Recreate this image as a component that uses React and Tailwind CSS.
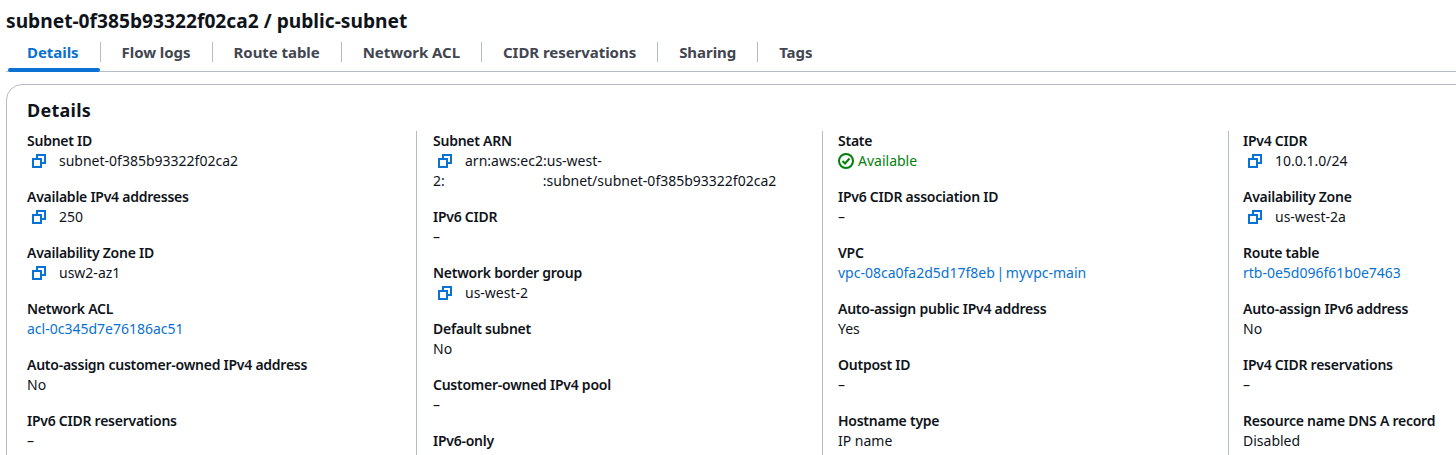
const copyIcon = (
  <svg viewBox="0 0 16 16" className="w-[16px] h-[16px] shrink-0 text-[#0972d3]" fill="none" stroke="currentColor" strokeWidth="2">
    <path d="M2 6h8v8H2z" />
    <path d="M6 5V2h8v8h-3" />
  </svg>
);

function Field({ label, value, copy, link, status, children }) {
  return (
    <div className="mb-[16px]">
      <div className="font-semibold text-[14px] leading-[20px] tracking-[-0.25px] text-[#0f141a]">{label}</div>
      <div className={`text-[14px] leading-[20px] ${link ? "text-[#0972d3]" : "text-[#0f141a]"}`}>
        {copy && <span className="inline-flex align-[-3px] ml-[4px] mr-[12px]">{copyIcon}</span>}
        {status && (
          <span className="inline-flex align-[-3px] mr-[4px]">
            <svg viewBox="0 0 16 16" className="w-[16px] h-[16px] text-[#037f0c]" fill="none" stroke="currentColor" strokeWidth="2">
              <circle cx="8" cy="8" r="7" />
              <path d="M4.5 8l2.5 2.5 4.5-5" />
            </svg>
          </span>
        )}
        {status ? <span className="text-[#037f0c]">{value}</span> : value}
        {children}
      </div>
    </div>
  );
}

const tabs = ["Details", "Flow logs", "Route table", "Network ACL", "CIDR reservations", "Sharing", "Tags"];

export default function App() {
  return (
    <div className="h-[455px] w-[1456px] overflow-hidden bg-white font-['Noto_Sans','Open_Sans',sans-serif]">
      <h1 className="pl-[6px] pt-[8px] text-[19.2px] leading-[26px] font-bold text-[#0f141a]">
        subnet-0f385b93322f02ca2 / public-subnet
      </h1>
      <div className="flex mt-[3px] ml-[6px] h-[35px] border-b border-[#b4bbc9]">
        {tabs.map((t, i) => (
          <div key={t} className="relative flex items-center h-[30px]">
            <div className={`px-[21px] font-bold text-[15px] leading-[20px] tracking-[-0.05px] ${i === 0 ? "text-[#0972d3]" : "text-[#424650]"}`}>{t}</div>
            {i < tabs.length - 1 && <div className="w-px h-[20px] bg-[#b4bbc9]" />}
            {i === 0 && <div className="absolute left-[2px] right-[1px] bottom-[-5px] h-[4px] rounded-[2px] bg-[#0972d3]" />}
          </div>
        ))}
      </div>
      <div className="ml-[6px] mt-[12px] w-[1480px] h-[400px] border border-[#b4bbc9] rounded-[16px] pl-[20px] pt-[13px]">
        <h2 className="text-[18px] leading-[24px] font-bold tracking-[0.25px] text-[#0f141a] mb-[9px]">Details</h2>
        <div className="flex">
          <div className="w-[389px]">
            <Field label="Subnet ID" value="subnet-0f385b93322f02ca2" copy />
            <Field label="Available IPv4 addresses" value="250" copy />
            <Field label="Availability Zone ID" value="usw2-az1" copy />
            <Field label="Network ACL" value="acl-0c345d7e76186ac51" link />
            <Field label="Auto-assign customer-owned IPv4 address" value="No" />
            <Field label="IPv6 CIDR reservations" value="–" />
          </div>
          <div className="w-[406px] border-l border-[#b4bbc9] pl-[16px]">
            <Field label="Subnet ARN" copy>
              arn:aws:ec2:us-west-
              <br />
              2:<span className="inline-block w-[98px]" />:subnet/subnet-0f385b93322f02ca2
            </Field>
            <Field label="IPv6 CIDR" value="–" />
            <Field label="Network border group" value="us-west-2" copy />
            <Field label="Default subnet" value="No" />
            <Field label="Customer-owned IPv4 pool" value="–" />
            <Field label="IPv6-only" />
          </div>
          <div className="w-[406px] border-l border-[#b4bbc9] pl-[15px]">
            <Field label="State" value="Available" status />
            <Field label="IPv6 CIDR association ID" value="–" />
            <Field label="VPC" link>
              <span className="[word-spacing:-2px]">vpc-08ca0fa2d5d17f8eb | myvpc-main</span>
            </Field>
            <Field label="Auto-assign public IPv4 address" value="Yes" />
            <Field label="Outpost ID" value="–" />
            <Field label="Hostname type" value="IP name" />
          </div>
          <div className="w-[228px] border-l border-[#b4bbc9] pl-[14px]">
            <Field label="IPv4 CIDR" value="10.0.1.0/24" copy />
            <Field label="Availability Zone" value="us-west-2a" copy />
            <Field label="Route table" value="rtb-0e5d096f61b0e7463" link />
            <Field label="Auto-assign IPv6 address" value="No" />
            <Field label="IPv4 CIDR reservations" value="–" />
            <Field label="Resource name DNS A record" value="Disabled" />
          </div>
        </div>
      </div>
    </div>
  );
}
